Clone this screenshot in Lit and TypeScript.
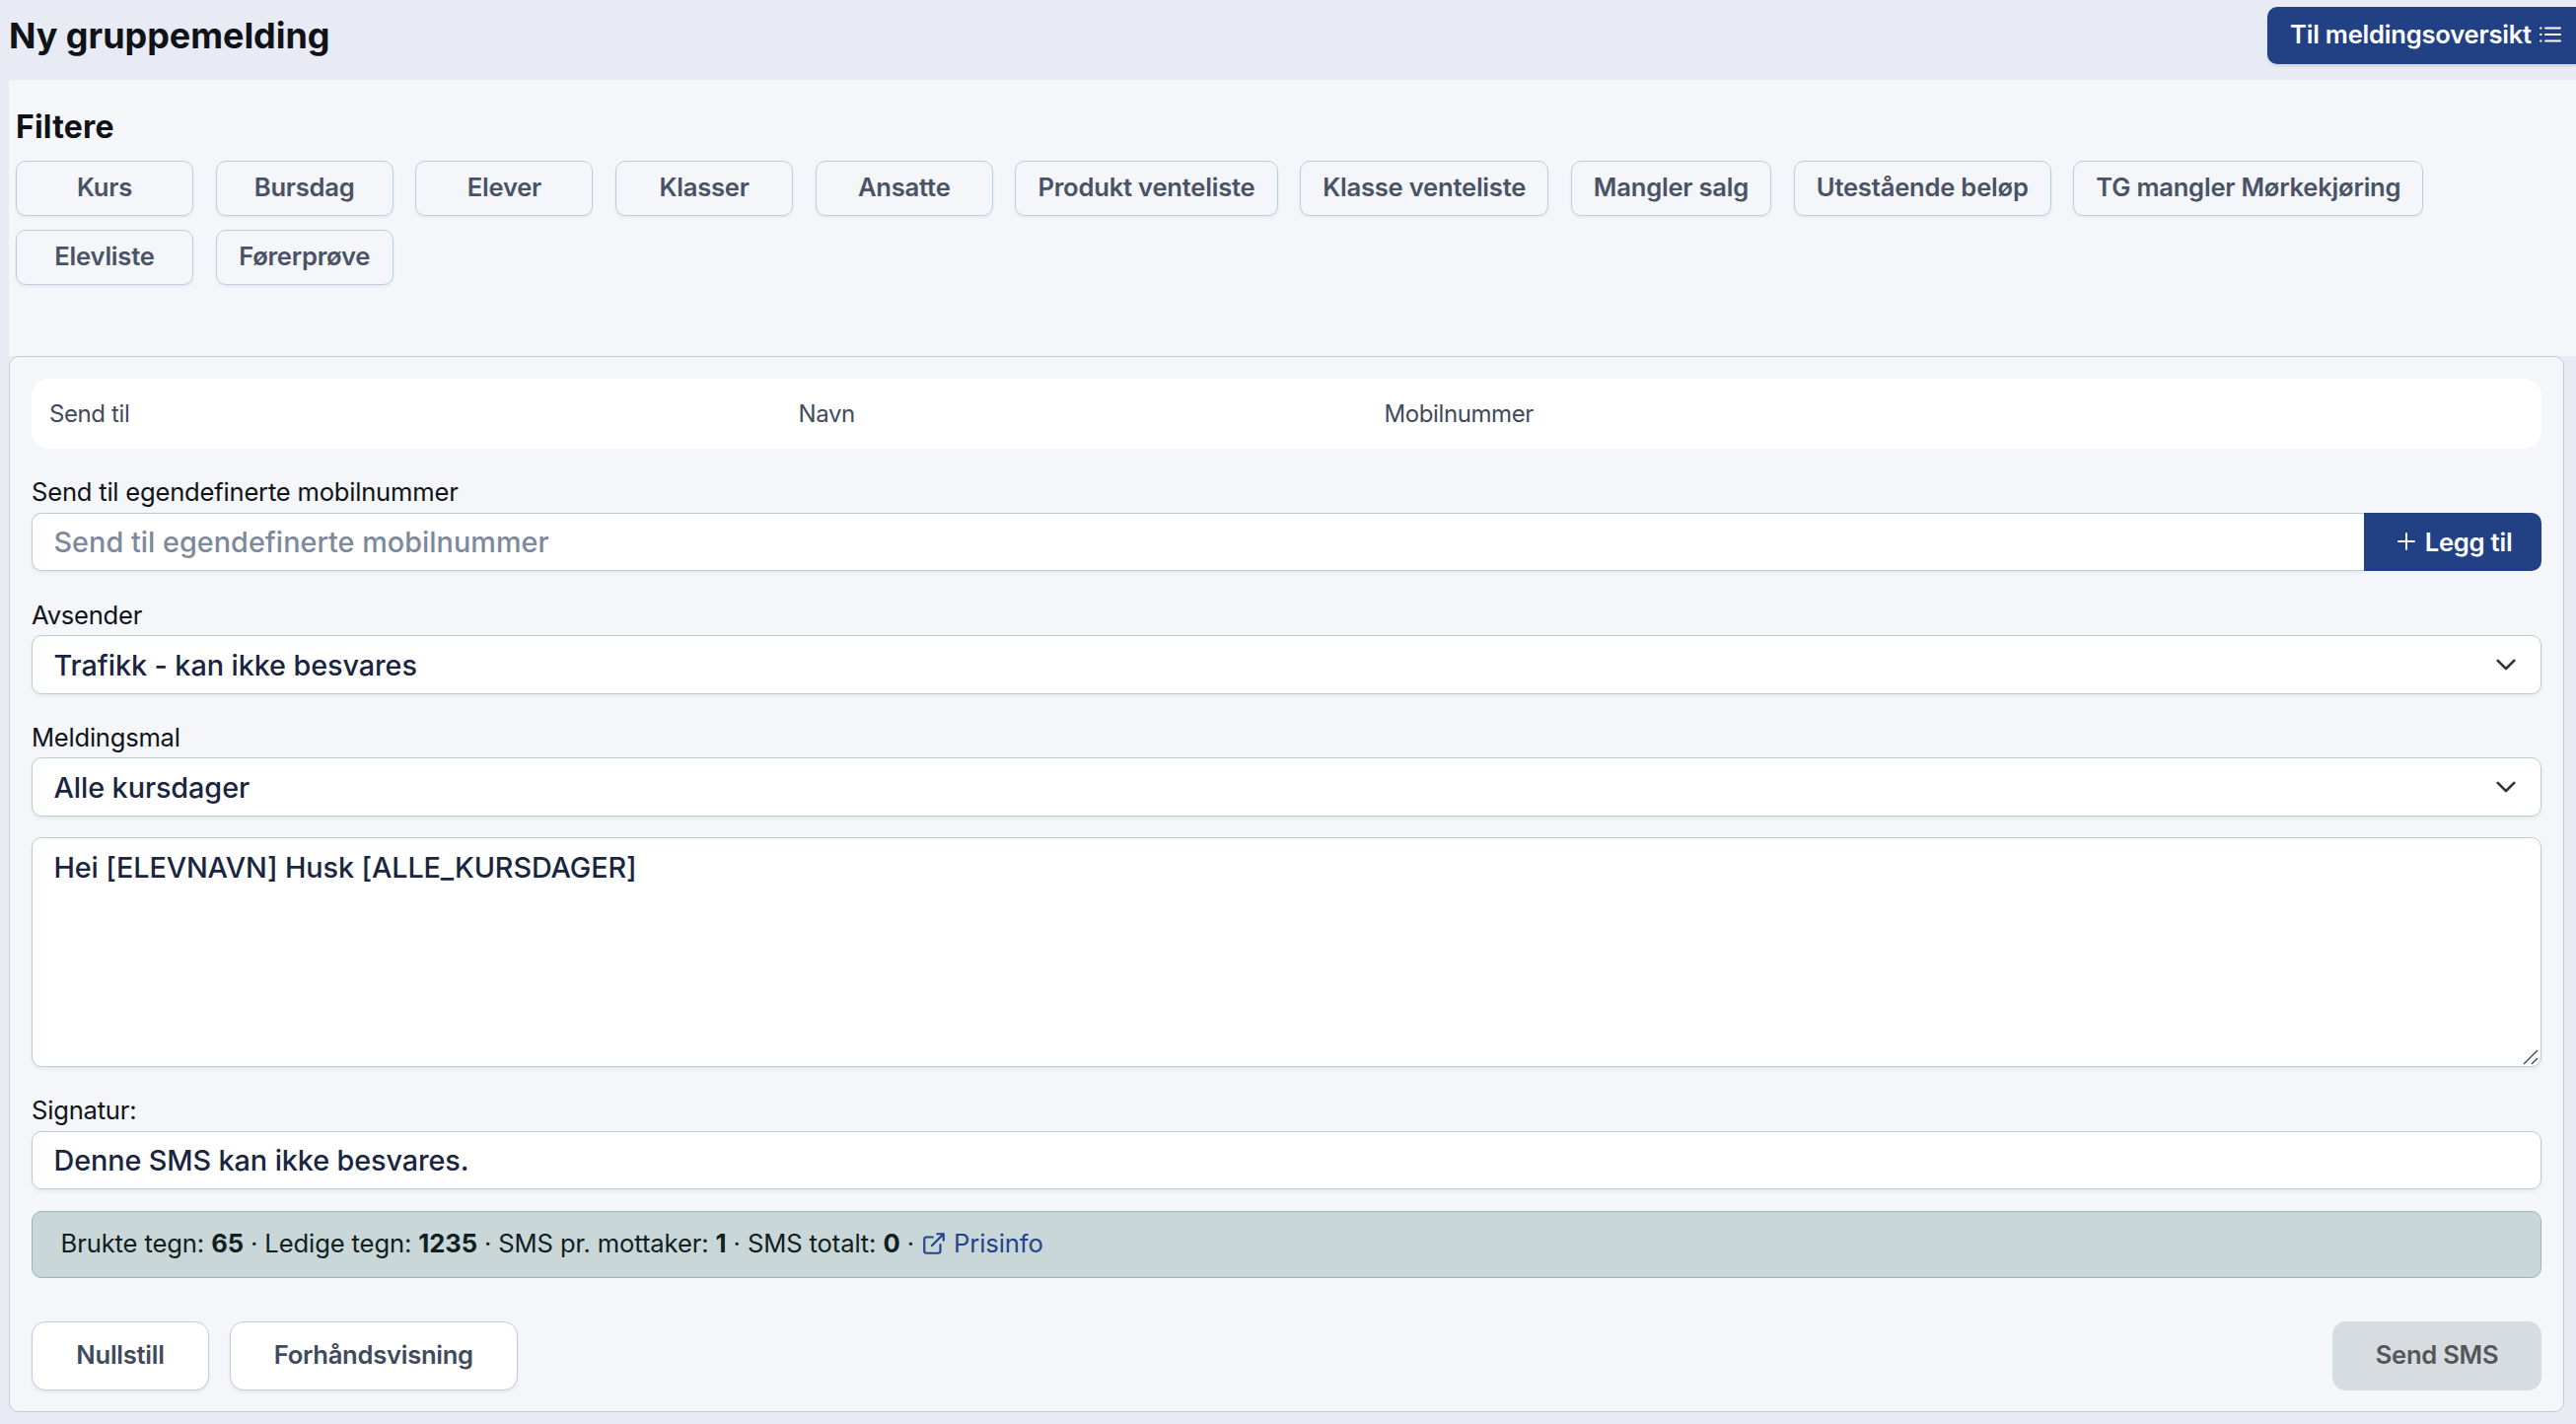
import { html, css, svg, LitElement } from "lit";
import { customElement, property } from "lit/decorators.js";

@customElement("select-field")
export class SelectFieldElement extends LitElement {
  @property()
  label = "";

  @property()
  value = "";

  override render() {
    return html`
      <span class="label">${this.label}</span>
      <div class="control">
        <span>${this.value}</span>
        <svg class="chevron" viewBox="0 0 16 16" aria-hidden="true">
          <path d="m2 5 6 6 6-6" />
        </svg>
      </div>
    `;
  }

  static styles = css`
    :host {
      display: block;
    }

    .label {
      display: block;
      height: 40px;
      font-size: 25.6px;
      line-height: 40px;
      letter-spacing: -0.25px;
    }

    .control {
      display: flex;
      align-items: center;
      justify-content: space-between;
      box-sizing: border-box;
      height: 60px;
      padding: 0 24.5px 0 21.5px;
      border: 1px solid #b8cfd0;
      border-radius: 10px;
      background: #fff;
      box-shadow: 0 2px 4px rgba(0, 0, 0, 0.06);
      color: #1a2540;
      font-size: 28.8px;
      font-weight: 500;
      letter-spacing: -0.08px;
    }

    .chevron {
      width: 22px;
      height: 22px;
      fill: none;
      stroke: #2f353b;
      stroke-width: 2;
      stroke-linecap: round;
      stroke-linejoin: round;
    }
  `;
}

const filters = [
  "Kurs",
  "Bursdag",
  "Elever",
  "Klasser",
  "Ansatte",
  "Produkt venteliste",
  "Klasse venteliste",
  "Mangler salg",
  "Utestående beløp",
  "TG mangler Mørkekjøring",
  "Elevliste",
  "Førerprøve",
];

const listIcon = svg`
  <path d="M6 1.5h15M6 8h15M6 14.5h15" />
  <path d="M1 1.5h.6M1 8h.6M1 14.5h.6" />
`;

@customElement("app-root")
export class AppRootElement extends LitElement {
  override render() {
    return html`
      <header class="topbar">
        <h1>Ny gruppemelding</h1>
        <button class="overview">
          Til meldingsoversikt
          <svg class="icon-list" viewBox="0 0 22 16" aria-hidden="true">
            ${listIcon}
          </svg>
        </button>
      </header>

      <section class="filters">
        <h2>Filtere</h2>
        <div class="filter-list">
          ${filters.map((name) => html`<button class="filter">${name}</button>`)}
        </div>
      </section>

      <main class="card">
        <div class="recipients">
          <span>Send til</span>
          <span>Navn</span>
          <span>Mobilnummer</span>
        </div>

        <label class="label" for="numbers">Send til egendefinerte mobilnummer</label>
        <div class="input-group">
          <input
            id="numbers"
            class="input"
            placeholder="Send til egendefinerte mobilnummer"
          />
          <button class="add">
            <svg class="icon-plus" viewBox="0 0 18 18" aria-hidden="true">
              <path d="M9 1v16M1 9h16" />
            </svg>
            Legg til
          </button>
        </div>

        <select-field
          class="sender"
          label="Avsender"
          value="Trafikk - kan ikke besvares"
        ></select-field>
        <select-field
          class="template"
          label="Meldingsmal"
          value="Alle kursdager"
        ></select-field>

        <div class="message">
          <span>Hei [ELEVNAVN] Husk [ALLE_KURSDAGER]</span>
          <svg class="grip" viewBox="0 0 16 16" aria-hidden="true">
            <path d="M1 15 15 1M9 15l6-6" />
          </svg>
        </div>

        <label class="label signature-label" for="signature">Signatur:</label>
        <input
          id="signature"
          class="input signature"
          value="Denne SMS kan ikke besvares."
        />

        <div class="info">
          <span>
            Brukte tegn: <b>65</b> · Ledige tegn: <b>1235</b> · SMS pr. mottaker:
            <b>1</b> · SMS totalt: <b>0</b> ·
            <a class="price"
              ><svg class="icon-link" viewBox="0 0 24 24" aria-hidden="true">
                <path
                  d="M18 13v6a2 2 0 0 1-2 2H5a2 2 0 0 1-2-2V8a2 2 0 0 1 2-2h6M15 3h6v6M10 14 21 3"
                />
              </svg>
              Prisinfo</a
            >
          </span>
        </div>

        <footer class="actions">
          <button class="action">Nullstill</button>
          <button class="action">Forhåndsvisning</button>
          <button class="action send" disabled>Send SMS</button>
        </footer>
      </main>
    `;
  }

  static styles = css`
    * {
      margin: 0;
      box-sizing: border-box;
    }

    :host {
      display: block;
      height: 1444px;
      overflow: hidden;
      background: #e8ebf4;
      color: #0f1318;
      font-family: Inter, "Liberation Sans", sans-serif;
      font-size: 25.6px;
      letter-spacing: -0.22px;
    }

    button,
    input {
      font-family: inherit;
      letter-spacing: inherit;
    }

    button {
      white-space: nowrap;
    }

    .topbar {
      display: flex;
      justify-content: space-between;
      height: 81px;
      padding-left: 9px;
    }

    h1 {
      font-size: 36px;
      font-weight: 700;
      line-height: 73px;
      letter-spacing: -0.05px;
    }

    .overview {
      display: flex;
      align-items: center;
      gap: 8px;
      width: 323px;
      height: 58px;
      margin: 7px -10px 0 0;
      padding: 0 0 3px 23px;
      border: 0;
      border-radius: 10px;
      background: #214184;
      box-shadow: 0 2px 3px rgba(0, 0, 0, 0.1);
      color: #fff;
      font-size: 25.6px;
      font-weight: 600;
    }

    .icon-list {
      width: 22px;
      height: 16px;
      fill: none;
      stroke: currentColor;
      stroke-width: 2;
      stroke-linecap: round;
    }

    .filters {
      height: 280px;
      margin-left: 9px;
      padding: 25px 60px 0 7px;
      background: #f4f6fa;
    }

    h2 {
      height: 57px;
      font-size: 32px;
      font-weight: 700;
      line-height: 46px;
      letter-spacing: 0.2px;
    }

    .filter-list {
      display: flex;
      flex-wrap: wrap;
      gap: 14px 22.7px;
    }

    .filter {
      min-width: 180px;
      height: 56px;
      padding: 0 22px 3px;
      border: 1px solid #c0cde0;
      border-radius: 10px;
      background: #f4f6fa;
      box-shadow: 0 2px 3px rgba(0, 0, 0, 0.06);
      color: #4a5365;
      font-size: 25.6px;
      font-weight: 600;
    }

    .card {
      height: 1071px;
      margin: 0 12px 0 9px;
      padding: 22px;
      border: 1px solid #c0cde0;
      border-radius: 10px;
      background: #f4f6fa;
    }

    .recipients {
      display: grid;
      grid-template-columns: 759.5px 594px 1fr;
      align-items: center;
      height: 71px;
      padding-left: 18px;
      border-radius: 18px;
      background: #fff;
      color: #414a5c;
      font-size: 24px;
      letter-spacing: -0.4px;
    }

    .label {
      display: block;
      height: 40px;
      margin-top: 25px;
      line-height: 38px;
    }

    .input-group {
      display: flex;
    }

    .input {
      flex: 1;
      width: 100%;
      height: 59px;
      padding: 0 21.5px;
      border: 1px solid #b8cfd0;
      border-radius: 10px;
      outline: 0;
      background: #fff;
      box-shadow: 0 2px 4px rgba(0, 0, 0, 0.06);
      color: #1a2540;
      font-size: 28.8px;
      font-weight: 500;
      letter-spacing: -0.1px;
    }

    .input::placeholder {
      color: #7e899b;
      letter-spacing: 0.02px;
    }

    .input-group .input {
      border-right: 0;
      border-radius: 10px 0 0 10px;
    }

    .add {
      display: flex;
      align-items: center;
      justify-content: center;
      gap: 10px;
      width: 180px;
      height: 59px;
      padding: 0 0 1px 4px;
      border: 0;
      border-radius: 0 10px 10px 0;
      background: #214184;
      color: #fff;
      font-size: 25.6px;
      font-weight: 600;
    }

    .icon-plus {
      width: 18px;
      height: 18px;
      fill: none;
      stroke: currentColor;
      stroke-width: 1.9;
      stroke-linecap: round;
    }

    .sender {
      margin-top: 25px;
    }

    .template {
      margin-top: 24px;
    }

    .message {
      display: flex;
      align-items: flex-start;
      justify-content: space-between;
      height: 233px;
      margin-top: 21px;
      padding: 12px 2px 1px 21.5px;
      border: 1px solid #b8cfd0;
      border-radius: 10px;
      background: #fff;
      box-shadow: 0 2px 4px rgba(0, 0, 0, 0.06);
      color: #1a2540;
      font-size: 28.8px;
      font-weight: 500;
      line-height: 36px;
      letter-spacing: -0.12px;
    }

    .grip {
      align-self: flex-end;
      width: 16px;
      height: 16px;
      fill: none;
      stroke: #444;
      stroke-width: 1.4;
    }

    .signature-label {
      margin-top: 25px;
    }

    .info {
      display: flex;
      align-items: center;
      height: 68px;
      margin-top: 22px;
      padding: 0 28.5px 3px;
      border: 1px solid #9ab5b6;
      border-radius: 10px;
      background: #cad7d8;
      color: #10201f;
      letter-spacing: -0.12px;
    }

    .info b {
      font-weight: 700;
    }

    .price {
      color: #24448c;
    }

    .icon-link {
      width: 26px;
      height: 26px;
      vertical-align: -4px;
      fill: none;
      stroke: currentColor;
      stroke-width: 2;
      stroke-linecap: round;
      stroke-linejoin: round;
    }

    .actions {
      display: flex;
      gap: 21px;
      margin-top: 44px;
    }

    .action {
      min-width: 180px;
      height: 70px;
      padding: 0 43.7px 3px;
      border: 1px solid #c0cde0;
      border-radius: 14px;
      background: #fff;
      box-shadow: 0 2px 3px rgba(0, 0, 0, 0.06);
      color: #414a5c;
      font-size: 25.6px;
      font-weight: 600;
      letter-spacing: -0.27px;
    }

    .send {
      margin-left: auto;
      border: 0;
      background: #d7dce0;
      box-shadow: none;
      color: #545657;
    }
  `;
}
